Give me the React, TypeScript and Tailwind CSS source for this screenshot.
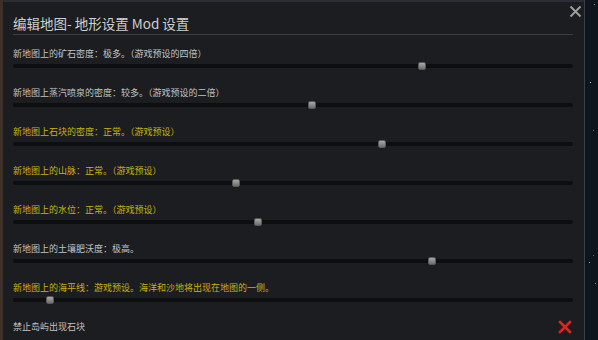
import React from "react";

const rows: { label: string; yellow: boolean; pos: number }[] = [
  { label: "新地图上的矿石密度：极多。（游戏预设的四倍）", yellow: false, pos: 422 },
  { label: "新地图上蒸汽喷泉的密度：较多。（游戏预设的二倍）", yellow: false, pos: 312 },
  { label: "新地图上石块的密度：正常。（游戏预设）", yellow: true, pos: 382 },
  { label: "新地图上的山脉：正常。（游戏预设）", yellow: true, pos: 236 },
  { label: "新地图上的水位：正常。（游戏预设）", yellow: true, pos: 258 },
  { label: "新地图上的土壤肥沃度：极高。", yellow: false, pos: 432 },
  { label: "新地图上的海平线：游戏预设。海洋和沙地将出现在地图的一侧。", yellow: true, pos: 50 },
];

export default function App() {
  return (
    <div
      className="flex h-[340px] w-[598px] overflow-hidden bg-[#1b1d21]"
      style={{ fontFamily: '"Noto Sans CJK SC", "Noto Sans", sans-serif' }}
    >
      <div className="w-[3px] shrink-0 bg-[#3d3029]" />
      <div className="relative flex-1 border-t-2 border-[#2a2e34] pl-[10px] pr-[11px]">
        <div className="pt-[12px] text-[13.5px] leading-[18px] text-[#cfcfcf]">
          编辑地图- 地形设置 Mod 设置
        </div>
        <div className="mt-[2px] h-px bg-[#3b3e43]" />
        <div className="mt-[12px] flex flex-col">
          {rows.map((r, i) => (
            <div key={i} className="flex h-[39px] flex-col">
              <div
                className={
                  "text-[9px] leading-[14px] " +
                  (r.yellow ? "text-[#c8b40c]" : "text-[#c2c2c2]")
                }
              >
                {r.label}
              </div>
              <div className="relative mt-[3px] h-[4px] rounded-full bg-[#0d0e10]">
                <div
                  className="absolute top-[-2px] h-[8px] w-[8px] rounded-[2px] border border-[#5a5a5a] bg-gradient-to-b from-[#a8a8a8] to-[#6e6e6e]"
                  style={{ left: r.pos - 13 - 4 }}
                />
              </div>
            </div>
          ))}
          <div className="flex items-center justify-between">
            <div className="text-[9px] leading-[14px] text-[#c2c2c2]">禁止岛屿出现石块</div>
            <svg width="14" height="14" viewBox="0 0 14 14" className="mr-[1px]">
              <path d="M2 2 L12 12 M12 2 L2 12" stroke="#e3231f" strokeWidth="2.6" strokeLinecap="square" />
            </svg>
          </div>
        </div>
        <svg
          width="13"
          height="13"
          viewBox="0 0 13 13"
          className="absolute right-[2px] top-[3px]"
        >
          <path d="M1.5 1.5 L11.5 11.5 M11.5 1.5 L1.5 11.5" stroke="#9c9c9c" strokeWidth="2" />
        </svg>
      </div>
      <div className="relative w-[14px] shrink-0 border-l border-[#3b4048] bg-[#0f151d]">
        <div className="absolute left-[9px] top-[4px] h-px w-px bg-[#8a9aa8]" />
        <div className="absolute left-[5px] top-[82px] h-px w-px bg-[#c0ccd8]" />
        <div className="absolute left-[8px] top-[130px] h-px w-px bg-[#5a6a78]" />
        <div className="absolute left-[8px] top-[255px] h-px w-px bg-[#5a6a78]" />
        <div className="absolute left-[4px] top-[262px] h-px w-px bg-[#a0acb8]" />
        <div className="absolute left-[10px] top-[283px] h-px w-px bg-[#8a9aa8]" />
      </div>
    </div>
  );
}
